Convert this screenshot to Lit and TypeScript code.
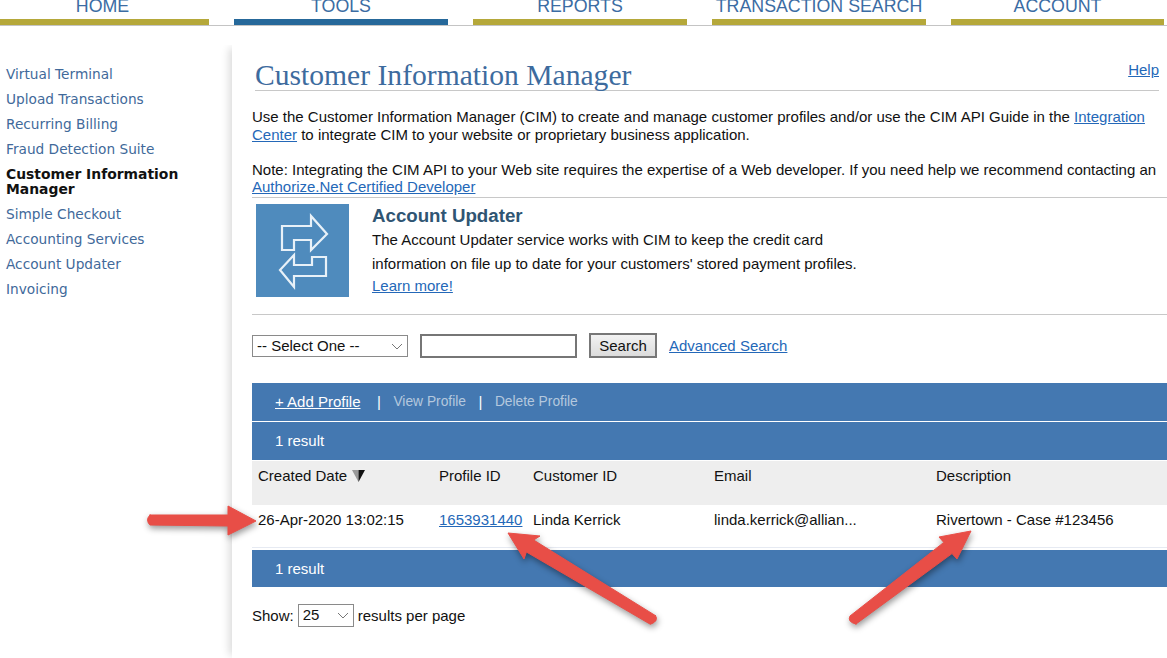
import { LitElement, html, css, svg } from 'lit';
import { customElement } from 'lit/decorators.js';

const TABS = [
  { label: 'HOME', width: 209 },
  { label: 'TOOLS', width: 214, active: true },
  { label: 'REPORTS', width: 214 },
  { label: 'TRANSACTION SEARCH', width: 214 },
  { label: 'ACCOUNT', width: 213 },
];

const SIDE_LINKS = [
  'Virtual Terminal',
  'Upload Transactions',
  'Recurring Billing',
  'Fraud Detection Suite',
  'Customer Information Manager',
  'Simple Checkout',
  'Accounting Services',
  'Account Updater',
  'Invoicing',
];

const chevron = html`<svg class="chevron" width="12" height="7" viewBox="0 0 12 7"><path d="M1 1l5 5 5-5" fill="none" stroke="#777" stroke-width="1"/></svg>`;

@customElement('app-root')
export class AppRoot extends LitElement {
  static styles = css`
    :host {
      display: block;
      position: relative;
      height: 658px;
      overflow: hidden;
      background: #fff;
      font-family: "Liberation Sans", Arial, sans-serif;
      font-size: 15px;
      color: #111;
    }

    a {
      color: #2468b8;
    }

    .nav {
      display: flex;
      height: 26px;
      gap: 25px;
      border-bottom: 1px solid #c4c4c4;
      box-sizing: border-box;
    }

    .tab {
      height: 25px;
      box-sizing: border-box;
      border-bottom: 6px solid #b5a83a;
      color: #3b6ca3;
      font-size: 17.8px;
      line-height: 12px;
      text-align: center;
      white-space: nowrap;
    }

    .tab:first-child {
      padding-right: 4px;
    }

    .tab.active {
      border-bottom-color: #26689a;
    }

    .layout {
      display: flex;
      margin-top: 19px;
      height: 613px;
    }

    .side {
      width: 232px;
      flex: none;
      padding: 17px 0 0 6px;
      box-sizing: border-box;
      font-family: "DejaVu Sans", Verdana, sans-serif;
      font-size: 13.7px;
      line-height: 15px;
      color: #41699a;
    }

    .side div {
      padding: 5px 40px 5px 0;
    }

    .side .current {
      color: #111;
      font-size: 13.9px;
      font-weight: bold;
    }

    .main {
      flex: 1;
      min-width: 0;
      padding: 0 0 0 20px;
      box-shadow: -6px 0 8px -3px rgba(0, 0, 0, 0.14);
      clip-path: inset(0 0 0 -14px);
      background: #fff;
    }

    .title-row {
      display: flex;
      justify-content: space-between;
      height: 46px;
      margin: 0 8px 0 3px;
      box-sizing: border-box;
      border-bottom: 1px solid #c8c8c8;
    }

    h1 {
      margin: 14px 0 0;
      font-family: "Liberation Serif", "Times New Roman", serif;
      font-weight: normal;
      font-size: 29.6px;
      line-height: 32px;
      color: #3d6b9e;
    }

    .help {
      margin-top: 17px;
      height: 16px;
      line-height: 16px;
    }

    .intro {
      margin: 17px 0 0;
      line-height: 18px;
    }

    .intro + .intro {
      line-height: 17px;
      padding-bottom: 2px;
    }

    .updater {
      display: flex;
      gap: 23px;
      border-top: 1px solid #c8c8c8;
      border-bottom: 1px solid #c8c8c8;
      padding: 6px 0 0 4px;
      height: 118px;
      box-sizing: border-box;
    }

    .updater-icon {
      width: 93px;
      height: 93px;
      flex: none;
      display: block;
    }

    .updater-text {
      margin-top: -1px;
    }

    h2 {
      margin: 0;
      font-size: 18.7px;
      line-height: 25px;
      font-weight: bold;
      color: #2f5573;
    }

    .updater p {
      margin: 0;
      line-height: 24px;
    }

    .updater .more {
      line-height: 20px;
    }

    .search {
      display: flex;
      align-items: flex-start;
      margin-top: 18px;
      height: 25px;
    }

    .select {
      position: relative;
      display: block;
      height: 23px;
    }

    select {
      appearance: none;
      display: block;
      box-sizing: border-box;
      width: 100%;
      height: 100%;
      margin: 0;
      padding: 0 0 2px 4px;
      border: 1px solid #8a8a8a;
      border-radius: 0;
      background: #fff;
      color: #111;
      font: inherit;
    }

    .chevron {
      position: absolute;
      right: 5px;
      top: 8px;
      pointer-events: none;
    }

    .select.wide {
      width: 156px;
      height: 22px;
      margin-top: 2px;
    }

    .select.small {
      width: 56px;
    }

    .term {
      width: 157px;
      height: 24px;
      box-sizing: border-box;
      margin: 1px 12px 0;
      border: 2px solid #767676;
      background: #fff;
    }

    button {
      width: 68px;
      height: 25px;
      margin: 0 12px 0 0;
      padding: 0;
      box-sizing: border-box;
      border: 2px solid #777;
      background: linear-gradient(#f2f2f2, #dcdcdc);
      color: #111;
      font: inherit;
    }

    .search a {
      line-height: 25px;
    }

    .bar {
      background: #4478b1;
      color: #fff;
      padding-left: 23px;
      height: 38px;
      line-height: 38px;
    }

    .actions {
      display: flex;
      gap: 12.5px;
      margin: 25px 0 1px;
      color: #fff;
    }

    .actions a {
      color: #fff;
      margin-right: 4px;
    }

    .actions .off {
      color: #b4c8de;
      font-size: 13.8px;
    }

    .grid {
      display: grid;
      grid-template-columns: 181px 94px 181px 222px 1fr;
    }

    .head {
      margin-top: 1px;
      height: 44px;
      background: #eee;
      line-height: 30px;
    }

    .row {
      height: 43px;
      line-height: 30px;
      border-bottom: 1px solid #e6eaf2;
      margin-bottom: 2px;
      box-sizing: border-box;
    }

    .grid > div {
      padding-left: 6px;
      white-space: nowrap;
    }

    .sort {
      margin-left: 1px;
      vertical-align: -1px;
    }

    .foot {
      height: 37px;
      line-height: 37px;
    }

    .show {
      display: flex;
      align-items: center;
      gap: 4px;
      margin-top: 17px;
    }

    .marks {
      position: absolute;
      inset: 0;
      pointer-events: none;
      filter: drop-shadow(1px 3px 3px rgba(0, 0, 0, 0.4));
    }
  `;

  render() {
    return html`
      <div class="nav">
        ${TABS.map(
          (t) => html`<div class="tab ${t.active ? 'active' : ''}" style="width:${t.width}px">${t.label}</div>`
        )}
      </div>
      <div class="layout">
        <div class="side">
          ${SIDE_LINKS.map(
            (l) => html`<div class=${l === 'Customer Information Manager' ? 'current' : ''}>${l}</div>`
          )}
        </div>
        <div class="main">
          <div class="title-row">
            <h1>Customer Information Manager</h1>
            <a class="help" href="#">Help</a>
          </div>
          <p class="intro">
            Use the Customer Information Manager (CIM) to create and manage customer profiles and/or use the CIM API Guide in the
            <a href="#">Integration Center</a> to integrate CIM to your website or proprietary business application.
          </p>
          <p class="intro">
            Note: Integrating the CIM API to your Web site requires the expertise of a Web developer. If you need help we recommend contacting an
            <a href="#">Authorize.Net Certified Developer</a>
          </p>
          <div class="updater">
            ${this.renderUpdaterIcon()}
            <div class="updater-text">
              <h2>Account Updater</h2>
              <p>The Account Updater service works with CIM to keep the credit card<br />information on file up to date for your customers' stored payment profiles.</p>
              <div class="more"><a href="#">Learn more!</a></div>
            </div>
          </div>
          <div class="search">
            <label class="select wide">
              <select><option>-- Select One --</option></select>
              ${chevron}
            </label>
            <input class="term" type="text" />
            <button>Search</button>
            <a href="#">Advanced Search</a>
          </div>
          <div class="bar actions">
            <a href="#">+ Add Profile</a><span>|</span><span class="off">View Profile</span><span>|</span><span class="off">Delete Profile</span>
          </div>
          <div class="bar">1 result</div>
          <div class="grid head">
            <div>Created Date <svg class="sort" width="13" height="12" viewBox="0 0 13 12"><path d="M0 0h6.5v12z" fill="#999"/><path d="M6.5 0H13L6.5 12z" fill="#111"/></svg></div>
            <div>Profile ID</div>
            <div>Customer ID</div>
            <div>Email</div>
            <div>Description</div>
          </div>
          <div class="grid row">
            <div>26-Apr-2020 13:02:15</div>
            <div><a href="#">1653931440</a></div>
            <div>Linda Kerrick</div>
            <div>linda.kerrick@allian...</div>
            <div>Rivertown - Case #123456</div>
          </div>
          <div class="bar foot">1 result</div>
          <div class="show">
            Show:
            <label class="select small">
              <select><option>25</option></select>
              ${chevron}
            </label>
            results per page
          </div>
        </div>
      </div>
      ${this.renderMarks()}
    `;
  }

  renderUpdaterIcon() {
    return html`<svg class="updater-icon" viewBox="0 0 93 93">
      <rect width="93" height="93" fill="#4f8bbd"/>
      <g fill="none" stroke="#e8f1f8" stroke-width="2.2" stroke-linejoin="miter">
        <path d="M26 22H55V12L71 30L55 46V36H38V46H26Z"/>
        <path d="M70 53H56V61H38V51L24 66L38 83V72H70Z"/>
      </g>
    </svg>`;
  }

  renderMarks() {
    const red = '#e84e47';
    return html`<svg class="marks" width="1167" height="658" viewBox="0 0 1167 658">
      ${svg`
        <g fill=${red} stroke=${red} stroke-linejoin="round" stroke-linecap="round">
          <path stroke-width="1" d="M150 515L228 515V506L256 521L228 535V526L150 525Q145 520 150 515Z"/>
          <path stroke-width="1" d="M655.6 615.7L533.6 540L540 536L508 533L524 559L526.4 552L650.4 624.3Q659 621 655.6 615.7Z"/>
          <path stroke-width="1" d="M856 624L952 553.6L957 559L971 531L939 537L943.8 542.4L850 616Q847 622 856 624Z"/>
        </g>
      `}
    </svg>`;
  }
}
